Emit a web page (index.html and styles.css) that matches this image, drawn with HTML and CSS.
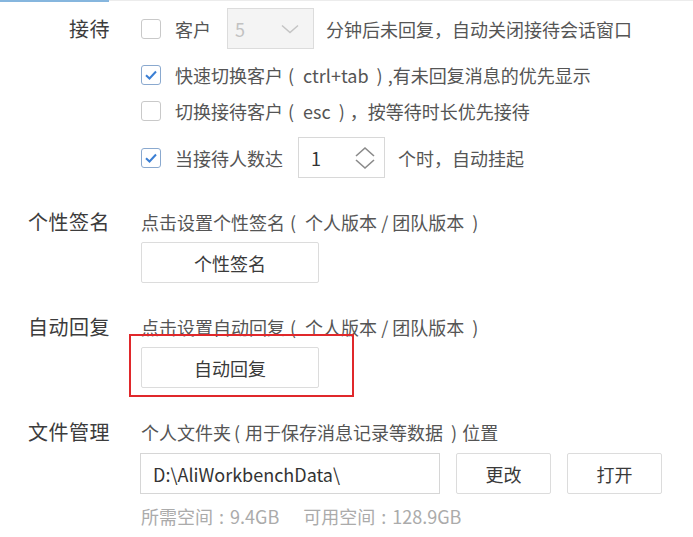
FILE: index.html
```html
<!DOCTYPE html>
<html lang="zh-CN">
<head>
<meta charset="utf-8">
<title>设置</title>
<link rel="stylesheet" href="styles.css">
</head>
<body>
<div class="topbar"><div class="topbar-active"></div></div>
<main class="settings">
  <section class="group group-first">
    <div class="label label-tall">接待</div>
    <div class="content">
      <div class="row row-tall">
        <span class="checkbox"></span>
        <span class="text">客户</span>
        <span class="select">
          <span class="select-value">5</span>
          <svg class="select-arrow" width="18" height="10" viewBox="0 0 18 10"><path d="M1 1.5 L9 8.5 L17 1.5" fill="none" stroke="#c4c4c4" stroke-width="1.5"/></svg>
        </span>
        <span class="text text-after">分钟后未回复，自动关闭接待会话窗口</span>
      </div>
      <div class="row row-gap">
        <span class="checkbox checked"><svg width="14" height="12" viewBox="0 0 14 12"><path d="M2 6.2 L5.5 9.5 L12 2.5" fill="none" stroke="#3b7fd4" stroke-width="2"/></svg></span>
        <span class="text">快速切换客户<span class="po">(</span>ctrl+tab<span class="pc">)</span>,有未回复消息的优先显示</span>
      </div>
      <div class="row">
        <span class="checkbox"></span>
        <span class="text">切换接待客户<span class="po">(</span>esc<span class="pc">)</span>，按等待时长优先接待</span>
      </div>
      <div class="row row-tall row-gap">
        <span class="checkbox checked"><svg width="14" height="12" viewBox="0 0 14 12"><path d="M2 6.2 L5.5 9.5 L12 2.5" fill="none" stroke="#3b7fd4" stroke-width="2"/></svg></span>
        <span class="text">当接待人数达</span>
        <span class="spinner">
          <span class="spinner-value">1</span>
          <svg class="spinner-arrows" width="22" height="24" viewBox="0 0 22 24"><path d="M2 10 L11 2 L20 10 M2 14 L11 22 L20 14" fill="none" stroke="#8a8a8a" stroke-width="1.6"/></svg>
        </span>
        <span class="text text-after2">个时，自动挂起</span>
      </div>
    </div>
  </section>

  <section class="group">
    <div class="label">个性签名</div>
    <div class="content">
      <div class="row"><span class="text">点击设置个性签名<span class="po">(</span>个人版本 / 团队版本<span class="pc">)</span></span></div>
      <div class="control"><button class="btn btn-wide">个性签名</button></div>
    </div>
  </section>

  <section class="group">
    <div class="label">自动回复</div>
    <div class="content">
      <div class="row"><span class="text">点击设置自动回复<span class="po">(</span>个人版本 / 团队版本<span class="pc">)</span></span></div>
      <div class="control">
        <span class="highlight-wrap">
          <button class="btn btn-wide">自动回复</button>
          <span class="highlight"></span>
        </span>
      </div>
    </div>
  </section>

  <section class="group">
    <div class="label">文件管理</div>
    <div class="content">
      <div class="row"><span class="text">个人文件夹<span class="po po-tight">(</span>用于保存消息记录等数据<span class="pc">)</span>位置</span></div>
      <div class="control control-row">
        <span class="input">D:\AliWorkbenchData\</span>
        <button class="btn btn-small">更改</button>
        <button class="btn btn-small">打开</button>
      </div>
      <div class="row hint-row">
        <span class="hint">所需空间<span class="colon">:</span>9.4GB</span>
        <span class="hint hint-second">可用空间<span class="colon">:</span>128.9GB</span>
      </div>
    </div>
  </section>
</main>
</body>
</html>
```

FILE: styles.css
```css
* { box-sizing: border-box; }

html, body {
  margin: 0;
  padding: 0;
  background: #ffffff;
}

body {
  width: 693px;
  height: 537px;
  overflow: hidden;
  font-family: "Noto Sans CJK SC", "Noto Sans", "Liberation Sans", sans-serif;
  color: #444;
}

.topbar {
  height: 1px;
  background: #ececec;
  display: flex;
}

.topbar-active {
  width: 109px;
  height: 2px;
  background: #86b6de;
}

.settings {
  padding-top: 7px;
  display: flex;
  flex-direction: column;
  gap: 26px;
}

.group {
  display: grid;
  grid-template-columns: 110px 1fr;
  column-gap: 31px;
  align-items: start;
}

.label {
  text-align: right;
  font-size: 20px;
  line-height: 36px;
  height: 36px;
  color: #3c3c3c;
  letter-spacing: 0.5px;
}

.label-tall {
  line-height: 41px;
  height: 41px;
}

.content {
  display: flex;
  flex-direction: column;
  align-items: flex-start;
}

.row {
  display: flex;
  align-items: center;
  height: 36px;
}

.row-tall { height: 41px; }
.row-gap { margin-top: 8px; }

.text {
  font-size: 18px;
  color: #555;
  white-space: nowrap;
  line-height: 1;
}

.po {
  padding: 0 9px 0 5px;
}

.po-tight {
  padding: 0 5px 0 3px;
}

.pc {
  padding: 0 5px 0 8px;
}

.checkbox {
  width: 20px;
  height: 20px;
  border: 1px solid #c9c9c9;
  border-radius: 3px;
  background: #fff;
  margin-right: 14px;
  display: inline-flex;
  align-items: center;
  justify-content: center;
  flex: none;
}

.checkbox.checked {
  border-color: #8aa9cf;
}

.select {
  margin-left: 16px;
  width: 87px;
  height: 41px;
  border: 1px solid #dcdcdc;
  background: #f4f4f4;
  display: flex;
  align-items: center;
  justify-content: space-between;
  padding: 0 14px 0 7px;
}

.select-value {
  font-size: 18px;
  color: #c2c2c2;
}

.text-after { margin-left: 12px; }
.text-after2 { margin-left: 13px; }

.spinner {
  margin-left: 15px;
  width: 87px;
  height: 41px;
  border: 1px solid #d8d8d8;
  background: #fff;
  display: flex;
  align-items: center;
  justify-content: space-between;
  padding: 0 8px 0 12px;
}

.spinner-value {
  font-size: 18px;
  color: #333;
}

.control {
  margin-top: 2px;
  display: flex;
}

.control-row {
  margin-top: 3px;
  gap: 16px;
  margin-left: -1px;
}

.btn {
  height: 41px;
  border: 1px solid #dcdcdc;
  border-radius: 2px;
  background: #fff;
  font-family: inherit;
  font-size: 18px;
  color: #3a3a3a;
  padding: 0;
  cursor: pointer;
}

.btn-wide { width: 178px; }
.btn-small { width: 95px; }

.highlight-wrap {
  position: relative;
  display: inline-flex;
}

.highlight {
  position: absolute;
  left: -12px;
  top: -13px;
  right: -35px;
  bottom: -9px;
  border: 2px solid #e0282b;
  pointer-events: none;
}

.input {
  width: 300px;
  height: 41px;
  border: 1px solid #d6d6d6;
  background: #fff;
  display: flex;
  align-items: center;
  padding-left: 12px;
  font-size: 18px;
  color: #333;
}

.hint-row {
  margin-top: 4px;
}

.hint {
  font-size: 18px;
  color: #ababab;
  white-space: nowrap;
  line-height: 1;
}

.hint-second {
  margin-left: 24px;
}

.colon {
  padding: 0 6px 0 6px;
}
```
